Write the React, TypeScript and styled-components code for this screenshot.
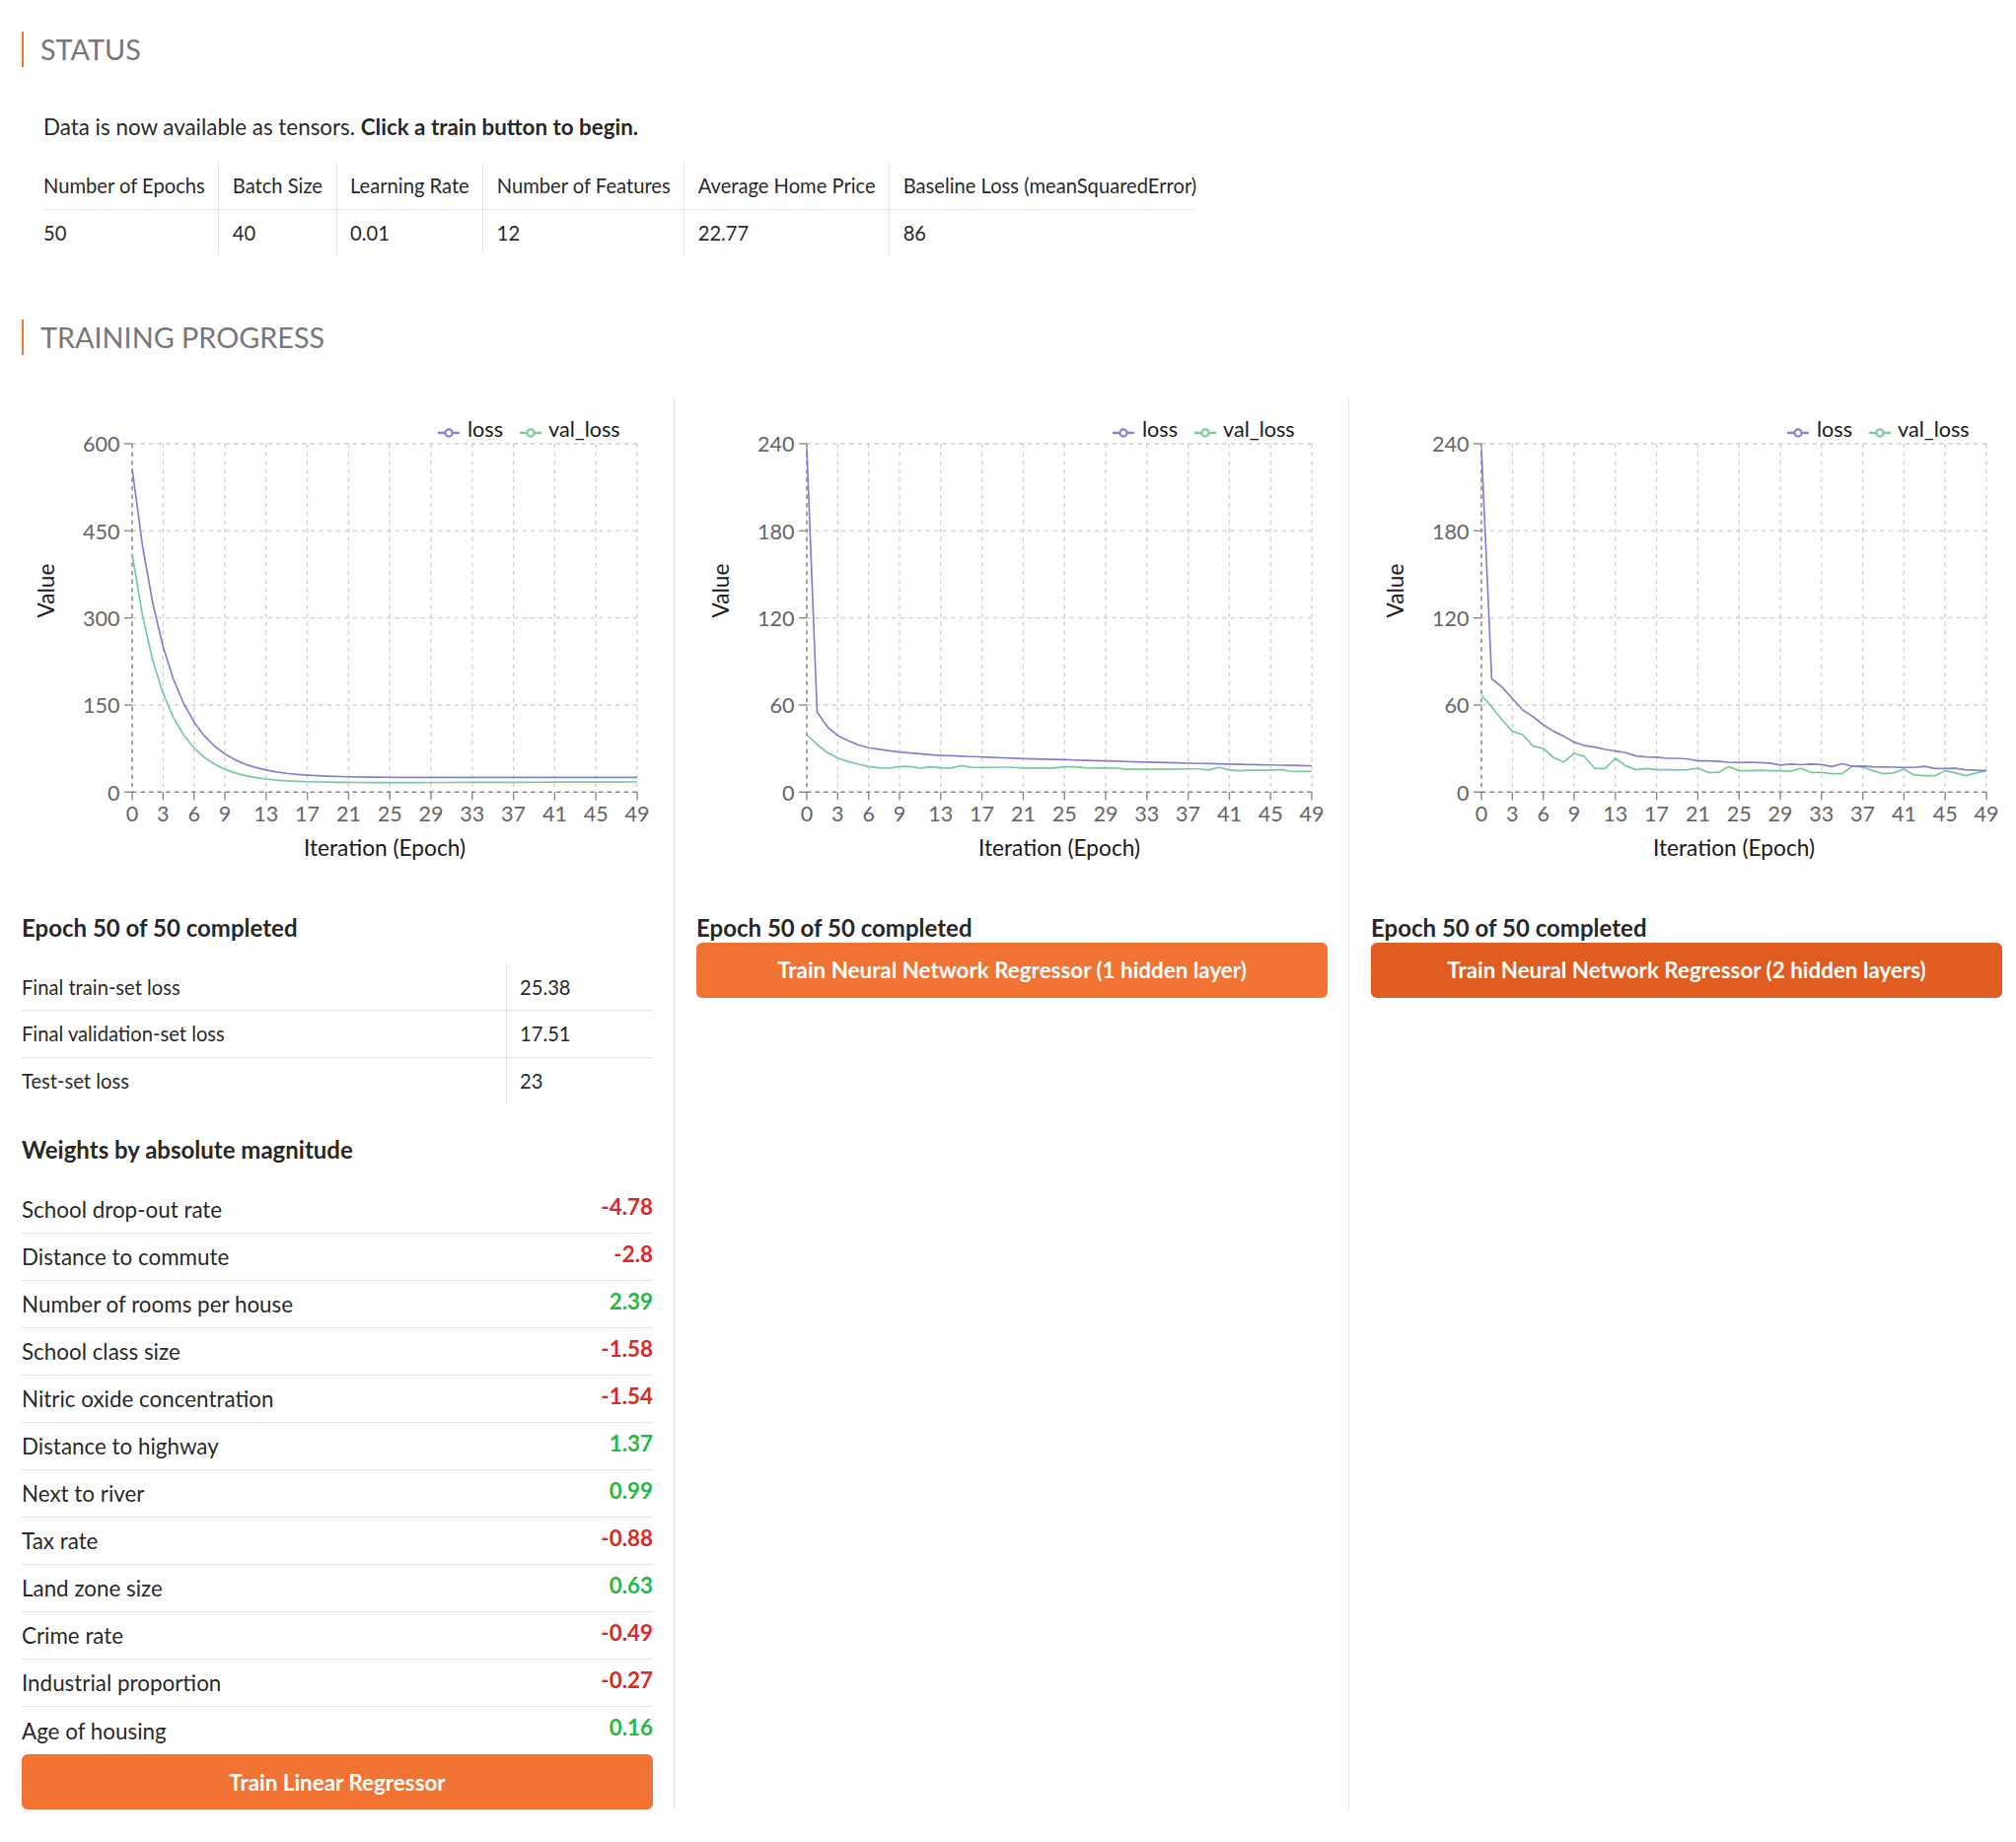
import React from 'react';
import styled, { createGlobalStyle } from 'styled-components';

const GlobalStyle = createGlobalStyle`
  html, body { margin: 0; padding: 0; background: #ffffff; }
  body {
    font-family: Lato, "Open Sans", "Noto Sans", sans-serif;
    color: rgba(0, 0, 0, 0.87);
  }
  * { box-sizing: border-box; }
`;

const Page = styled.div`
  width: 2044px;
  padding: 32px 0 32px 22px;
`;

const SectionHead = styled.h2<{ $top?: number }>`
  margin: ${(p) => p.$top ?? 0}px 0 0 0;
  font-size: 28.8px;
  line-height: 36px;
  font-weight: 400;
  color: #777777;
  border-left: 2px solid #ea7637;
  padding-left: 17px;
`;

const StatusBlock = styled.section`
  padding-left: 22px;
`;

const StatusText = styled.p`
  margin: 45px 0 0 0;
  font-size: 22.4px;
  line-height: 32px;
`;

const StatusTable = styled.table`
  margin-top: 20px;
  border-collapse: collapse;
  font-size: 20.16px;
  line-height: 26.5px;

  th, td {
    text-align: left;
    font-weight: 400;
    padding: 10px 13.5px;
    white-space: nowrap;
  }
  th { border-bottom: 1px solid #e4e4e4; }
  th + th, td + td { border-left: 1px solid #e4e4e4; }
  th:first-child, td:first-child { padding-left: 0; }
  th:last-child, td:last-child { padding-right: 0; }
`;

const Columns = styled.div`
  margin-top: 44px;
  display: grid;
  grid-template-columns: 640px 663px 663px;
  column-gap: 21px;
`;

const Column = styled.div<{ $divided?: boolean }>`
  display: flex;
  flex-direction: column;
  border-left: ${(p) => (p.$divided ? '1px solid #e2e2e2' : 'none')};
  padding-left: ${(p) => (p.$divided ? 22 : 0)}px;
`;

const ChartSvg = styled.svg`
  display: block;
  width: 640px;
  height: 500px;
  font-family: Lato, "Open Sans", sans-serif;
`;

const TickLabel = styled.text`
  font-size: 21.6px;
  fill: #666666;
`;

const AxisTitle = styled.text`
  font-size: 22.7px;
  fill: #1a1a1a;
`;

const LegendText = styled.text`
  font-size: 21.6px;
  fill: #1a1a1a;
`;

const BlockHead = styled.h4<{ $top: number }>`
  margin: ${(p) => p.$top}px 0 0 0;
  font-size: 24px;
  line-height: 29.6px;
  font-weight: 700;
  color: rgba(0, 0, 0, 0.87);
`;

const ResultTable = styled.table`
  margin-top: 22px;
  width: 100%;
  border-collapse: collapse;
  font-size: 20.16px;
  line-height: 26.5px;

  td {
    padding: 10px 13.5px;
    text-align: left;
  }
  td:first-child { padding-left: 0; width: 491px; }
  td:last-child { padding-right: 0; }
  td + td { border-left: 1px solid #e4e4e4; }
  tr + tr td { border-top: 1px solid #e4e4e4; }
`;

const WeightList = styled.div`
  margin-top: 22.5px;
  display: flex;
  flex-direction: column;
`;

const WeightRow = styled.div`
  display: flex;
  align-items: center;
  justify-content: space-between;
  height: 48px;
  font-size: 22.4px;
  line-height: 27.6px;
  border-bottom: 1px solid #e4e4e4;

  &:last-child { border-bottom: none; }
`;

const WeightName = styled.span`
  padding-top: 1px;
`;

const WeightValue = styled.span<{ $negative: boolean }>`
  font-weight: 700;
  padding-bottom: 6px;
  color: ${(p) => (p.$negative ? '#db2828' : '#21ba45')};
`;

const TrainButton = styled.button<{ $dark?: boolean }>`
  display: block;
  width: 100%;
  height: 56px;
  margin: 0;
  border: none;
  border-radius: 6px;
  background: ${(p) => (p.$dark ? '#e05c20' : '#f07333')};
  color: #ffffff;
  font-family: Lato, "Open Sans", sans-serif;
  font-size: 22.4px;
  font-weight: 700;
  cursor: pointer;
`;

const PX = 112;
const PY = 46;
const PW = 512;
const PH = 353.3;
const X_TICKS = [0, 3, 6, 9, 13, 17, 21, 25, 29, 33, 37, 41, 45, 49];
const LOSS_COLOR = '#8480d9';
const VAL_COLOR = '#79c99c';

function interp(points: [number, number][]): number[] {
  const out: number[] = [];
  for (let e = 0; e < 50; e++) {
    let i = 0;
    while (i < points.length - 2 && points[i + 1][0] < e) i++;
    const [e0, v0] = points[i];
    const [e1, v1] = points[i + 1];
    const t = e1 === e0 ? 0 : (e - e0) / (e1 - e0);
    out.push(v0 + (v1 - v0) * Math.max(0, Math.min(1, t)));
  }
  return out;
}

const loss1 = Array.from({ length: 50 }, (_, e) => 24.9 + 532 * Math.exp(-e / 3.5) + 0.4 * (e / 49));
const val1 = Array.from({ length: 50 }, (_, e) => 15.2 + 395 * Math.exp(-e / 3.2) + 2.3 * (e / 49));

const loss2 = interp([
  [0, 237], [1, 55], [2, 45], [3, 39], [4, 35.5], [5, 32.5], [6, 30.6], [7, 29.5], [8, 28.5],
  [9, 27.6], [10, 27], [11, 26.4], [12, 25.8], [13, 25.3], [21, 23.1], [29, 21.5], [37, 19.9], [49, 18.1],
]);
const val2 = [
  39.6, 32.8, 27.2, 23.5, 21, 19.2, 17.6, 16.8, 16.5, 17.6, 17.6, 16.5, 17.4, 16.8, 16.6, 18.3, 17, 17, 17, 17.2,
  17, 16.6, 16.6, 16.6, 16.6, 17.5, 17.4, 16.8, 16.6, 16.6, 16.5, 15.8, 15.8, 15.8, 15.8, 15.8, 15.9, 16, 16, 15.2,
  17, 15.2, 14.7, 15, 15, 15, 15.6, 14.3, 14.3, 14.3,
];
const loss3 = [
  236.6, 78, 72.4, 64.5, 56.6, 52, 46.4, 41.9, 38.5, 34.4, 32.1, 31, 29.4, 28.3, 27.2, 24.9, 24.3, 24, 23.3, 23.3,
  22.8, 21.5, 21.5, 21.2, 20.6, 20.3, 20.6, 20.3, 20, 18.6, 19.3, 18.9, 19.3, 19, 17.6, 19.6, 17.8, 18, 17.5, 17.3,
  17.2, 16.9, 17, 17.8, 16.3, 16.2, 16.4, 15.4, 15, 14.7,
];
const val3 = [
  66.8, 58.8, 49.8, 41.9, 39.6, 31.7, 30.1, 23.8, 20.8, 26.7, 24.5, 16.3, 16.3, 23.3, 18.1, 15.4, 16.3, 15.4, 15.4, 15.2,
  15.4, 16.5, 13.6, 13.6, 17.6, 14.7, 14.7, 15, 14.7, 14.7, 14.4, 16.3, 13.6, 13.6, 12.7, 12.7, 17.9, 17.2, 14.7, 12.7,
  13.2, 15.8, 11.8, 11.3, 11.3, 14.7, 13.2, 11.3, 13.2, 14.7,
];

type ChartProps = { yMax: number; loss: number[]; val: number[] };

function LossChart({ yMax, loss, val }: ChartProps) {
  const xs = (e: number) => PX + (e * PW) / 49;
  const ys = (v: number) => PY + PH - (v / yMax) * PH;
  const yTicks = [0, 1, 2, 3, 4].map((i) => (i * yMax) / 4);
  const bottom = PY + PH;
  const toPoints = (arr: number[]) => arr.map((v, e) => `${xs(e).toFixed(2)},${ys(v).toFixed(2)}`).join(' ');

  return (
    <ChartSvg viewBox="0 0 640 500">
      {yTicks.map((t) => (
        <line key={`hg${t}`} x1={PX} x2={PX + PW} y1={ys(t)} y2={ys(t)} stroke="#cfcfcf" strokeWidth={1.3} strokeDasharray="4.3,4.3" />
      ))}
      {X_TICKS.map((t) => (
        <line key={`vg${t}`} x1={xs(t)} x2={xs(t)} y1={PY} y2={bottom} stroke="#cfcfcf" strokeWidth={1.3} strokeDasharray="4.3,4.3" />
      ))}
      <line x1={PX} x2={PX} y1={PY} y2={bottom} stroke="#888888" strokeWidth={1.4} strokeDasharray="4.3,4.3" />
      <line x1={PX} x2={PX + PW} y1={bottom} y2={bottom} stroke="#888888" strokeWidth={1.4} strokeDasharray="4.3,4.3" />
      {yTicks.map((t) => (
        <g key={`yt${t}`}>
          <line x1={PX - 8} x2={PX} y1={ys(t)} y2={ys(t)} stroke="#888888" strokeWidth={1.4} />
          <TickLabel x={PX - 12.5} y={ys(t) + 8.3} textAnchor="end">
            {t}
          </TickLabel>
        </g>
      ))}
      {X_TICKS.map((t) => (
        <g key={`xt${t}`}>
          <line x1={xs(t)} x2={xs(t)} y1={bottom} y2={bottom + 8} stroke="#888888" strokeWidth={1.4} />
          <TickLabel x={xs(t)} y={bottom + 29.4} textAnchor="middle">
            {t}
          </TickLabel>
        </g>
      ))}
      <polyline points={toPoints(val)} fill="none" stroke={VAL_COLOR} strokeWidth={1.7} strokeLinejoin="round" />
      <polyline points={toPoints(loss)} fill="none" stroke={LOSS_COLOR} strokeWidth={1.7} strokeLinejoin="round" />
      <AxisTitle x={PX + PW / 2} y={463.7} textAnchor="middle">
        Iteration (Epoch)
      </AxisTitle>
      <AxisTitle transform="translate(33,195) rotate(-90)" textAnchor="middle">
        Value
      </AxisTitle>
      <line x1={422} x2={444} y1={35} y2={35} stroke={LOSS_COLOR} strokeWidth={2.4} />
      <circle cx={433} cy={35} r={3.6} fill="#ffffff" stroke={LOSS_COLOR} strokeWidth={2.2} />
      <LegendText x={452} y={39.3}>loss</LegendText>
      <line x1={505} x2={527} y1={35} y2={35} stroke={VAL_COLOR} strokeWidth={2.4} />
      <circle cx={516} cy={35} r={3.6} fill="#ffffff" stroke={VAL_COLOR} strokeWidth={2.2} />
      <LegendText x={534} y={39.3}>val_loss</LegendText>
    </ChartSvg>
  );
}

const weights: [string, number][] = [
  ['School drop-out rate', -4.78],
  ['Distance to commute', -2.8],
  ['Number of rooms per house', 2.39],
  ['School class size', -1.58],
  ['Nitric oxide concentration', -1.54],
  ['Distance to highway', 1.37],
  ['Next to river', 0.99],
  ['Tax rate', -0.88],
  ['Land zone size', 0.63],
  ['Crime rate', -0.49],
  ['Industrial proportion', -0.27],
  ['Age of housing', 0.16],
];

export default function App() {
  return (
    <>
      <GlobalStyle />
      <Page>
        <SectionHead>STATUS</SectionHead>
        <StatusBlock>
          <StatusText>
            Data is now available as tensors. <b>Click a train button to begin.</b>
          </StatusText>
          <StatusTable>
            <thead>
              <tr>
                <th>Number of Epochs</th>
                <th>Batch Size</th>
                <th>Learning Rate</th>
                <th>Number of Features</th>
                <th>Average Home Price</th>
                <th>Baseline Loss (meanSquaredError)</th>
              </tr>
            </thead>
            <tbody>
              <tr>
                <td>50</td>
                <td>40</td>
                <td>0.01</td>
                <td>12</td>
                <td>22.77</td>
                <td>86</td>
              </tr>
            </tbody>
          </StatusTable>
        </StatusBlock>

        <SectionHead $top={64.7}>TRAINING PROGRESS</SectionHead>

        <Columns>
          <Column>
            <LossChart yMax={600} loss={loss1} val={val1} />
            <BlockHead $top={22.3}>Epoch 50 of 50 completed</BlockHead>
            <ResultTable>
              <tbody>
                <tr>
                  <td>Final train-set loss</td>
                  <td>25.38</td>
                </tr>
                <tr>
                  <td>Final validation-set loss</td>
                  <td>17.51</td>
                </tr>
                <tr>
                  <td>Test-set loss</td>
                  <td>23</td>
                </tr>
              </tbody>
            </ResultTable>
            <BlockHead $top={32}>Weights by absolute magnitude</BlockHead>
            <WeightList>
              {weights.map(([name, w]) => (
                <WeightRow key={name}>
                  <WeightName>{name}</WeightName>
                  <WeightValue $negative={w < 0}>{w}</WeightValue>
                </WeightRow>
              ))}
            </WeightList>
            <TrainButton>Train Linear Regressor</TrainButton>
          </Column>
          <Column $divided>
            <LossChart yMax={240} loss={loss2} val={val2} />
            <BlockHead $top={22.3}>Epoch 50 of 50 completed</BlockHead>
            <TrainButton>Train Neural Network Regressor (1 hidden layer)</TrainButton>
          </Column>
          <Column $divided>
            <LossChart yMax={240} loss={loss3} val={val3} />
            <BlockHead $top={22.3}>Epoch 50 of 50 completed</BlockHead>
            <TrainButton $dark>Train Neural Network Regressor (2 hidden layers)</TrainButton>
          </Column>
        </Columns>
      </Page>
    </>
  );
}
